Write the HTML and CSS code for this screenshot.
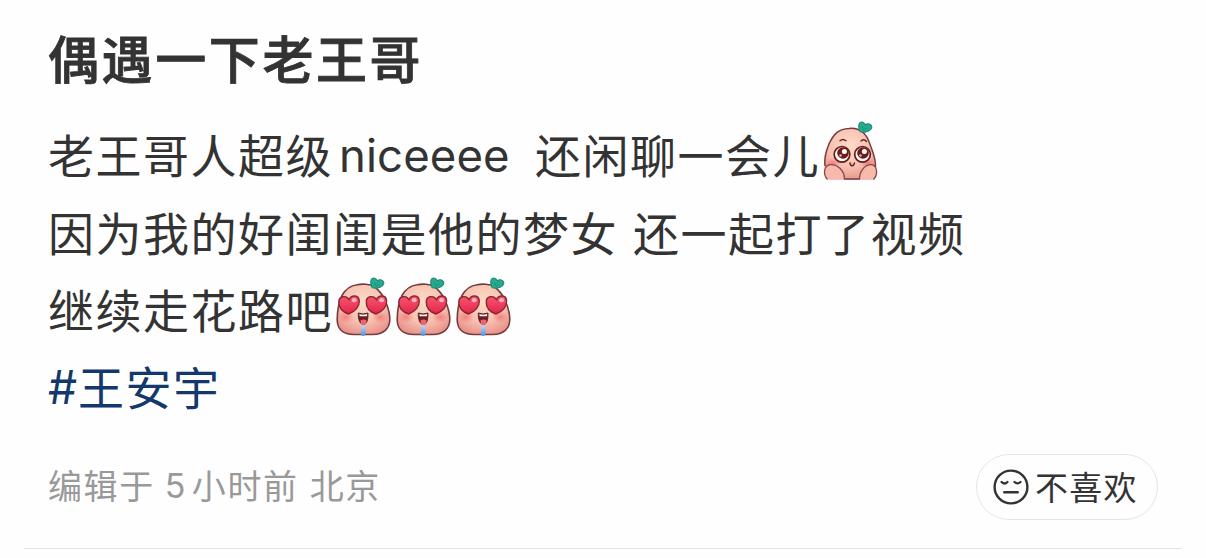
FILE: index.html
```html
<!DOCTYPE html>
<html lang="zh-CN">
<head>
    <meta charset="utf-8">
    <title>偶遇一下老王哥</title>
    <link rel="stylesheet" href="styles.css">
</head>
<body>
    <!-- shared drawings for the inline stickers -->
    <svg class="defs" width="0" height="0">
        <defs>
            <radialGradient id="skin" cx="50%" cy="35%" r="68%">
                <stop offset="0" stop-color="#fcdcc8"/>
                <stop offset="0.6" stop-color="#f8c0b0"/>
                <stop offset="1" stop-color="#e8928a"/>
            </radialGradient>
            <linearGradient id="heartFill" x1="0" y1="0" x2="0" y2="1">
                <stop offset="0" stop-color="#f8566f"/>
                <stop offset="1" stop-color="#e3264b"/>
            </linearGradient>
            <radialGradient id="blush">
                <stop offset="0" stop-color="#f26f70" stop-opacity="0.75"/>
                <stop offset="1" stop-color="#f26f70" stop-opacity="0"/>
            </radialGradient>
            <linearGradient id="drool" x1="0" y1="0" x2="0" y2="1">
                <stop offset="0" stop-color="#b5dcfa"/>
                <stop offset="1" stop-color="#4c92dc"/>
            </linearGradient>
            <symbol id="leaf" viewBox="0 0 14 12">
                <path d="M2 10C0 6 .3 2 2.4 1.2 4.5 .3 6.2 2 6.8 3.5 8.5 1.8 11.5 2.3 12.5 4.2 14.2 7.5 10 9.5 6.5 10.5Z" fill="#27a890" stroke="#1d8a76" stroke-width="1"/>
                <path d="M4 5 5.5 8.5 8.5 6.5" fill="none" stroke="#1d8a76" stroke-width=".7"/>
            </symbol>
            <symbol id="heart" viewBox="0 0 22 20">
                <path d="M10.5 19C4.500 17 1 12.500 1 7.500 1 1.500 8 .2 11 5 13.500-.2 20.500 .3 21 6 21.300 11.500 17 17 10.500 19Z" fill="url(#heartFill)" stroke="#8b2532" stroke-width="1.4"/>
                <ellipse cx="16" cy="5.5" rx="2.4" ry="2" fill="#ffb3bd"/>
            </symbol>
            <symbol id="love" viewBox="0 0 60 60">
                <path d="M24 8.8C29 7.6 37 7.8 41 10.5 46 14 49 18 52 24 55 31 57 38 56.8 44 56.5 53 50 58.5 40 58.5H21C10 58.5 4.300 53 4.200 44 4.200 36 6 26 9 19.5 13 12.5 18 9.5 24 8.8Z" fill="url(#skin)" stroke="#753c3d" stroke-width="1.6"/>
                <ellipse cx="13" cy="41" rx="8" ry="6" fill="url(#blush)"/>
                <ellipse cx="47" cy="41" rx="8" ry="6" fill="url(#blush)"/>
                <use href="#heart" x="4.8" y="18.5" width="22.5" height="20.5"/>
                <use href="#heart" x="32.2" y="18.5" width="22.5" height="20.5"/>
                <path d="M25.3 37Q30 39 34.9 37C35.2 43 34 48.5 30.5 48.5 27 48.5 25 43 25.3 37Z" fill="#691d25" stroke="#5d2025"/>
                <path d="M26.3 38Q30 39.5 34.2 38L33.8 40.3H26.7Z" fill="#fff"/>
                <path d="M27.5 44.5Q30.5 42.5 33.7 44.5 33 49.5 30.5 49.5 28 49.5 27.5 44.5Z" fill="#ed6571"/>
                <path d="M28.5 50Q30.5 48.5 32 50L32.7 56Q32.7 60 30.2 60 27.7 60 27.7 57Z" fill="url(#drool)"/>
                <use href="#leaf" x="37" y="1" width="15" height="13"/>
            </symbol>
            <symbol id="shy" viewBox="0 0 60 60">
                <path d="M29 7.5C39 6 46 12 49.5 22 53 32 58 46 53 58.5H9C2 49 4 36 9 24 14 13 19 8 29 7.5Z" fill="url(#skin)"/>
                <path d="M5 45C4 37 6 30 9 23 14 12 19 8 29 7.5 39 6.5 46 12 49.5 22 52 29 56 37 55.5 46M24.5 58H39.5" fill="none" stroke="#753c3d" stroke-width="1.5"/>
                <ellipse cx="13" cy="42" rx="8" ry="5" fill="url(#blush)"/>
                <ellipse cx="48" cy="42" rx="8" ry="5" fill="url(#blush)"/>
                <path d="M20 19.8Q23 17 26 19.8M41 20Q44 17.500 46.500 20.5" fill="none" stroke="#6b2022" stroke-width="1.4" stroke-linecap="round"/>
                <g fill="#fff" stroke="#651c1c" stroke-width="1.7">
                    <circle cx="22" cy="33.3" r="7.8"/>
                    <circle cx="42.5" cy="33.3" r="7.8"/>
                </g>
                <circle cx="23" cy="32" r="5.8" fill="#6d1b18"/>
                <circle cx="43" cy="32" r="5.8" fill="#6d1b18"/>
                <circle cx="24.4" cy="30.5" r="2.5" fill="#fff"/>
                <circle cx="44.4" cy="30.5" r="2.5" fill="#fff"/>
                <circle cx="20.5" cy="34.5" r="1.2" fill="#e8bcb2"/>
                <circle cx="40.5" cy="34.5" r="1.2" fill="#e8bcb2"/>
                <path d="M30 42Q30.5 44.8 32.2 44.8 34 44.8 34.4 42" fill="none" stroke="#6b2022" stroke-width="1.5" stroke-linecap="round"/>
                <path d="M7.5 58.5C2.5 53 4 45 10 43.7 17 43 24.500 49 24.5 58.5M53.5 58.5C58.500 53 57 45 52 43.7 45 43 39.5 50 39.5 58.5" fill="#f7b9ab" stroke="#84484a" stroke-width="1.3"/>
                <use href="#leaf" x="38" y="0" width="15" height="13"/>
            </symbol>
        </defs>
    </svg>

    <div class="note">
        <h1 class="title">偶遇一下老王哥</h1>
        <div class="desc">
            <p>老王哥人超级<span class="latin">niceeee</span>还闲聊一会儿<svg class="emoji"><use href="#shy"/></svg></p>
            <p>因为我的好闺闺是他的梦女<span class="gap"></span>还一起打了视频</p>
            <p>继续走花路吧<svg class="emoji"><use href="#love"/></svg><svg class="emoji"><use href="#love"/></svg><svg class="emoji"><use href="#love"/></svg></p>
            <p><a class="tag"><span class="hash">#</span>王安宇</a></p>
        </div>
        <div class="footer">
            <div class="date"><span>编辑于</span><span class="num">5</span><span>小时前</span><span class="place">北京</span></div>
            <div class="dislike">
                <svg class="face" viewBox="0 0 36 36" fill="none" stroke="#333" stroke-linecap="round">
                    <circle cx="18" cy="18" r="16.4" stroke-width="2.4"/>
                    <path d="M8.5 13Q11.5 16 14.5 13M21.5 13Q24.5 16 27.5 13" stroke-width="2.2"/>
                    <path d="M11.3 23.2H24.7" stroke-width="2.4"/>
                </svg>
                <span>不喜欢</span>
            </div>
        </div>
    </div>
</body>
</html>
```
FILE: styles.css
```css
* { box-sizing: border-box; }
body { margin: 0; background-color: #fefefe; color: #333; font-family: "Noto Sans CJK SC", sans-serif; }
.defs { display: block; }
.note { height: 549px; margin: 0 24px; padding: 20px 24px 0; border-bottom: 1px solid #e4e4e4; }
.title { margin: 0; height: 95px; line-height: 74px; font-size: 51px; font-weight: 500; letter-spacing: 2.6px; white-space: nowrap; -webkit-text-stroke: 0.8px #333; }
.desc p { display: flex; align-items: center; margin: 0; height: 77.7px; line-height: 77.7px; font-size: 46px; letter-spacing: 1.5px; white-space: nowrap; }
.latin { width: 202px; padding: 3px 0 0 6px; font-family: Inter, sans-serif; font-size: 45.5px; letter-spacing: 0.1px; }
.gap { width: 15px; }
.emoji { width: 60px; height: 60px; margin: -6px 0 0; }
.tag { display: flex; color: #13386c; }
.hash { width: 30px; padding-top: 2px; font-family: Inter, sans-serif; }
.footer { display: flex; justify-content: space-between; align-items: center; height: 66px; margin-top: 28px; }
.date { display: flex; align-items: center; margin-top: -5px; color: #999; font-size: 34px; letter-spacing: 1.6px; }
.num { width: 37px; padding: 2px 0 0 10px; font-family: Inter, sans-serif; }
.place { padding-left: 11px; }
.dislike { display: flex; align-items: center; width: 182px; height: 66px; padding-left: 16px; border: 1px solid #e5e5e5; border-radius: 33px; font-size: 33px; letter-spacing: 1.2px; white-space: nowrap; }
.dislike span { margin-top: -2px; }
.face { width: 36px; height: 36px; margin-right: 6px; }
```
